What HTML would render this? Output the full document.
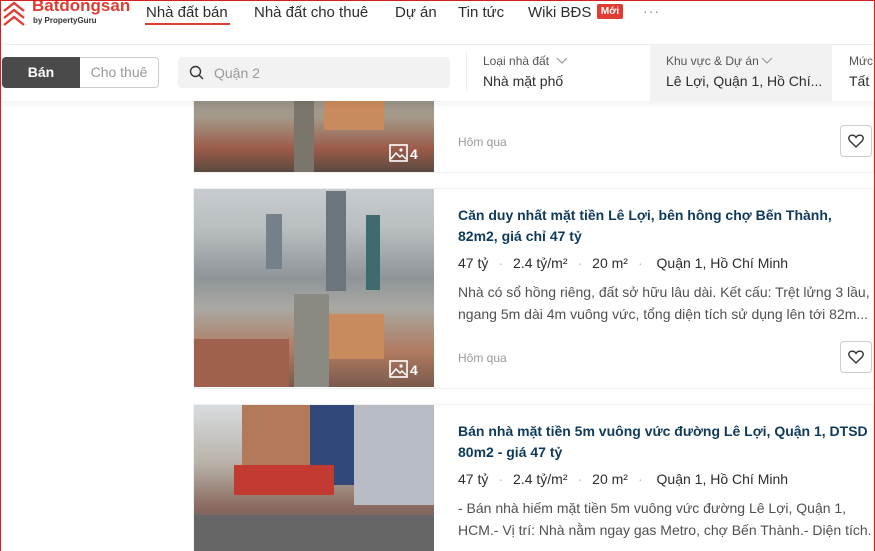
<!DOCTYPE html>
<html><head><meta charset="utf-8"><style>
*{box-sizing:border-box;margin:0;padding:0}
html,body{width:875px;height:551px;overflow:hidden}
body{background:#fff;font-family:"Liberation Sans",sans-serif;position:relative;color:#2c2c2c}
.frame{position:absolute;left:0;top:0;width:875px;height:551px;border:1px solid #d32020;border-bottom:none;pointer-events:none;z-index:50}
.hdr{position:absolute;left:0;top:0;width:875px;height:45px;background:#fff;border-bottom:1px solid #eee}
.nav{position:absolute;top:4px;font-size:15px;color:#2c2c2c}
.bar{position:absolute;left:0;top:45px;width:875px;height:56px;background:#fff;box-shadow:0 3px 6px rgba(0,0,0,.06);z-index:5}
.card{position:absolute;left:193px;width:681px;border:1px solid #f0f0f0;background:#fff}
.img{position:absolute;left:194px;width:240px;overflow:hidden}
.t{position:absolute;left:458px;font-size:14px;color:#0e3a5c;font-weight:bold;line-height:21px;white-space:nowrap}
.m{position:absolute;left:458px;font-size:14px;color:#2c2c2c;white-space:nowrap}
.m span.d{color:#bbb;margin:0 10px}
.ds{position:absolute;left:458px;font-size:14px;color:#505050;line-height:22px;width:412px;white-space:nowrap;overflow:hidden}
.hq{position:absolute;left:458px;font-size:12px;color:#999}
.heart{position:absolute;left:840px;width:32px;height:32px;border:1px solid #ccc;border-radius:4px;background:#fff}
.cnt{position:absolute;color:#fff;font-weight:bold;font-size:14px}
</style></head><body>
<div class="frame"></div>
<div class="hdr">
 <svg style="position:absolute;left:1px;top:1px" width="30" height="26" viewBox="0 0 30 26"><g fill="none" stroke="#e03c31" stroke-width="2.4"><path d="M3 10 L13 2 L23 10"/><path d="M3 17 L13 9 L23 17"/><path d="M3 24 L13 16 L23 24"/></g></svg>
 <div style="position:absolute;left:32px;top:-4px;font-size:17px;font-weight:bold;color:#e03c31">Batdongsan</div>
 <div style="position:absolute;left:33px;top:16px;font-size:8px;font-weight:bold;color:#333">by PropertyGuru</div>
 <div class="nav" style="left:146px">Nhà đất bán</div>
 <div style="position:absolute;left:145px;top:23px;width:85px;height:2px;background:#e03c31"></div>
 <div class="nav" style="left:254px">Nhà đất cho thuê</div>
 <div class="nav" style="left:395px">Dự án</div>
 <div class="nav" style="left:458px">Tin tức</div>
 <div class="nav" style="left:528px">Wiki BĐS</div>
 <div style="position:absolute;left:597px;top:4px;width:26px;height:15px;background:#e03c31;color:#fff;font-size:10px;font-weight:bold;text-align:center;line-height:15px;border-radius:2px">Mới</div>
 <div style="position:absolute;left:643px;top:3px;font-size:14px;color:#888;letter-spacing:1px">···</div>
</div>
<div class="bar">
 <div style="position:absolute;left:2px;top:12px;width:78px;height:31px;background:#4a4a4a;color:#fff;font-weight:bold;font-size:14px;text-align:center;line-height:31px;border-radius:4px 0 0 4px">Bán</div>
 <div style="position:absolute;left:80px;top:12px;width:79px;height:31px;border:1px solid #ccc;border-left:none;color:#999;font-size:14px;text-align:center;line-height:29px;border-radius:0 4px 4px 0">Cho thuê</div>
 <div style="position:absolute;left:178px;top:12px;width:272px;height:31px;background:#f2f2f2;border-radius:4px"></div>
 <svg style="position:absolute;left:189px;top:20px" width="15" height="15" viewBox="0 0 15 15"><circle cx="6.5" cy="6.5" r="5" fill="none" stroke="#333" stroke-width="1.4"/><path d="M10.2 10.2 L14 14" stroke="#333" stroke-width="1.4"/></svg>
 <div style="position:absolute;left:214px;top:20px;font-size:14px;color:#999">Quận 2</div>
 <div style="position:absolute;left:466px;top:6px;height:40px;border-left:1px solid #eee"></div>
 <div style="position:absolute;left:483px;top:9px;font-size:12px;color:#555">Loại nhà đất</div>
 <svg style="position:absolute;left:556px;top:12px" width="12" height="8"><path d="M1 1 L6 6 L11 1" fill="none" stroke="#999" stroke-width="1.2"/></svg>
 <div style="position:absolute;left:483px;top:28px;font-size:14px;color:#2c2c2c">Nhà mặt phố</div>
 <div style="position:absolute;left:650px;top:0;width:182px;height:56px;background:#f2f2f2"></div>
 <div style="position:absolute;left:666px;top:9px;font-size:12px;color:#555">Khu vực &amp; Dự án</div>
 <svg style="position:absolute;left:761px;top:12px" width="12" height="8"><path d="M1 1 L6 6 L11 1" fill="none" stroke="#999" stroke-width="1.2"/></svg>
 <div style="position:absolute;left:666px;top:28px;font-size:14px;color:#2c2c2c">Lê Lợi, Quận 1, Hồ Chí...</div>
 <div style="position:absolute;left:849px;top:9px;font-size:12px;color:#555">Mức</div>
 <div style="position:absolute;left:849px;top:28px;font-size:14px;color:#2c2c2c">Tất</div>
</div>

<!-- card 1 -->
<div class="card" style="top:80px;height:93px"></div>
<div class="img" style="top:80px;height:92px;background:linear-gradient(180deg,#8a8d88 0%,#a59a8a 40%,#9b5a48 75%,#5a4a40 100%)">
 <div style="position:absolute;left:130px;top:20px;width:60px;height:30px;background:#c98a5d"></div>
 <div style="position:absolute;left:100px;top:10px;width:20px;height:82px;background:#7a766c"></div>
</div>
<svg style="position:absolute;left:389px;top:144px" width="19" height="18"><rect x="1" y="1" width="17" height="16" fill="none" stroke="#fff" stroke-width="1.6"/><path d="M2 15 L7 9 L11 13 L13 11 L17 15" fill="none" stroke="#fff" stroke-width="1.5"/><circle cx="12" cy="6" r="1.6" fill="#fff"/></svg>
<div class="cnt" style="left:410px;top:146px">4</div>
<div class="hq" style="top:135px">Hôm qua</div>
<div class="heart" style="top:125px"></div>
<svg style="position:absolute;left:848px;top:134px" width="16" height="14" viewBox="0 0 16 14"><path d="M8 13 L2 7 C0 5 0.5 1.5 4 1.2 C6 1 7.3 2.3 8 3.5 C8.7 2.3 10 1 12 1.2 C15.5 1.5 16 5 14 7 Z" fill="none" stroke="#333" stroke-width="1.4" stroke-linejoin="round"/></svg>

<!-- card 2 -->
<div class="card" style="top:188px;height:201px"></div>
<div class="img" style="top:189px;height:198px;background:linear-gradient(180deg,#c8ccd0 0%,#b9bec0 20%,#8e9498 45%,#a9a9a3 60%,#b07a60 82%,#7a5a4c 100%)">
 <div style="position:absolute;left:132px;top:2px;width:20px;height:100px;background:#6c747c"></div>
 <div style="position:absolute;left:172px;top:26px;width:14px;height:75px;background:#3f6a6e"></div>
 <div style="position:absolute;left:72px;top:25px;width:16px;height:55px;background:#75808a"></div>
 <div style="position:absolute;left:100px;top:105px;width:35px;height:93px;background:#8b8a82"></div>
 <div style="position:absolute;left:135px;top:125px;width:55px;height:45px;background:#c98a5d"></div>
 <div style="position:absolute;left:0;top:150px;width:95px;height:48px;background:#a0604e"></div>
</div>
<svg style="position:absolute;left:389px;top:360px" width="19" height="18"><rect x="1" y="1" width="17" height="16" fill="none" stroke="#fff" stroke-width="1.6"/><path d="M2 15 L7 9 L11 13 L13 11 L17 15" fill="none" stroke="#fff" stroke-width="1.5"/><circle cx="12" cy="6" r="1.6" fill="#fff"/></svg>
<div class="cnt" style="left:410px;top:362px">4</div>
<div class="t" style="top:205px">Căn duy nhất mặt tiền Lê Lợi, bên hông chợ Bến Thành,<br>82m2, giá chỉ 47 tỷ</div>
<div class="m" style="top:255px">47 tỷ<span class="d">·</span>2.4 tỷ/m²<span class="d">·</span>20 m²<span class="d">·</span> Quận 1, Hồ Chí Minh</div>
<div class="ds" style="top:281px">Nhà có sổ hồng riêng, đất sở hữu lâu dài. Kết cấu: Trệt lửng 3 lầu,<br>ngang 5m dài 4m vuông vức, tổng diện tích sử dụng lên tới 82m...</div>
<div class="hq" style="top:351px">Hôm qua</div>
<div class="heart" style="top:341px"></div>
<svg style="position:absolute;left:848px;top:350px" width="16" height="14" viewBox="0 0 16 14"><path d="M8 13 L2 7 C0 5 0.5 1.5 4 1.2 C6 1 7.3 2.3 8 3.5 C8.7 2.3 10 1 12 1.2 C15.5 1.5 16 5 14 7 Z" fill="none" stroke="#333" stroke-width="1.4" stroke-linejoin="round"/></svg>

<!-- card 3 -->
<div class="card" style="top:404px;height:160px"></div>
<div class="img" style="top:405px;height:146px;background:linear-gradient(180deg,#d8dce0 0%,#b8b2a8 40%,#8a6a60 70%,#555 100%)">
 <div style="position:absolute;left:48px;top:0;width:68px;height:90px;background:#b27a5a"></div>
 <div style="position:absolute;left:116px;top:0;width:44px;height:80px;background:#30497a"></div>
 <div style="position:absolute;left:160px;top:0;width:80px;height:100px;background:#b8bcc4"></div>
 <div style="position:absolute;left:40px;top:60px;width:100px;height:30px;background:#c23a30"></div>
 <div style="position:absolute;left:0;top:110px;width:240px;height:36px;background:#666"></div>
</div>
<div class="t" style="top:421px">Bán nhà mặt tiền 5m vuông vức đường Lê Lợi, Quận 1, DTSD<br>80m2 - giá 47 tỷ</div>
<div class="m" style="top:471px">47 tỷ<span class="d">·</span>2.4 tỷ/m²<span class="d">·</span>20 m²<span class="d">·</span> Quận 1, Hồ Chí Minh</div>
<div class="ds" style="top:497px">- Bán nhà hiếm mặt tiền 5m vuông vức đường Lê Lợi, Quận 1,<br>HCM.- Vị trí: Nhà nằm ngay gas Metro, chợ Bến Thành.- Diện tích...</div>
</body></html>
